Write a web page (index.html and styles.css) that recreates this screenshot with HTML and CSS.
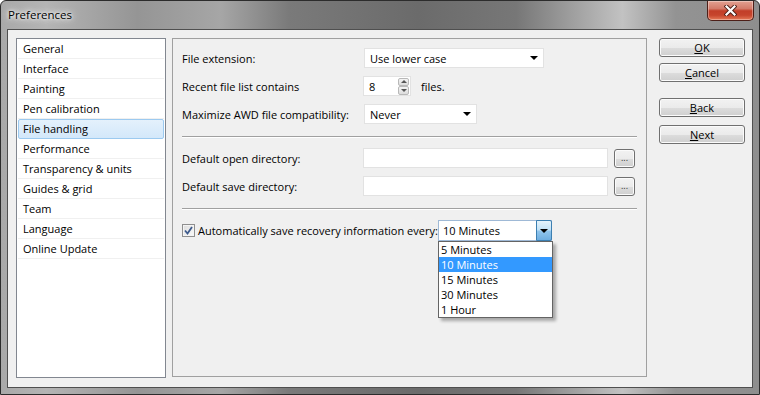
FILE: index.html
```html
<!DOCTYPE html>
<html lang="en">
<head>
    <meta charset="UTF-8">
    <title>Preferences</title>
    <link rel="stylesheet" href="styles.css">
</head>
<body>
    <div class="window">
        <div class="titlebar">
            <span class="title">Preferences</span>
            <div class="close-btn">
                <svg width="13" height="11" viewBox="0 0 13 11">
                    <path d="M2.5 1.5 L10.5 9.5 M10.5 1.5 L2.5 9.5" stroke="#4a1d16" stroke-width="4" stroke-linecap="square"/>
                    <path d="M2.5 1.5 L10.5 9.5 M10.5 1.5 L2.5 9.5" stroke="#fff" stroke-width="2.2" stroke-linecap="square"/>
                </svg>
            </div>
        </div>
        <div class="client">
            <ul class="page-list">
                <li>General</li>
                <li>Interface</li>
                <li>Painting</li>
                <li>Pen calibration</li>
                <li class="selected">File handling</li>
                <li>Performance</li>
                <li>Transparency &amp; units</li>
                <li>Guides &amp; grid</li>
                <li>Team</li>
                <li>Language</li>
                <li>Online Update</li>
            </ul>

            <div class="panel">
                <div class="group first">
                    <div class="row">
                        <span class="label">File extension:</span>
                        <div class="combo combo-ext"><span>Use lower case</span><span class="arrow"></span></div>
                    </div>
                    <div class="row">
                        <span class="label">Recent file list contains</span>
                        <div class="spinbox">
                            <span class="spin-value">8</span>
                            <div class="spin-btns">
                                <div class="spin-btn"><span class="up"></span></div>
                                <div class="spin-btn"><span class="down"></span></div>
                            </div>
                        </div>
                        <span class="unit">files.</span>
                    </div>
                    <div class="row">
                        <span class="label">Maximize AWD file compatibility:</span>
                        <div class="combo combo-awd"><span>Never</span><span class="arrow"></span></div>
                    </div>
                </div>

                <div class="sep"></div>

                <div class="group">
                    <div class="row">
                        <span class="label">Default open directory:</span>
                        <div class="textbox"></div>
                        <div class="btn btn-small">...</div>
                    </div>
                    <div class="row">
                        <span class="label">Default save directory:</span>
                        <div class="textbox"></div>
                        <div class="btn btn-small">...</div>
                    </div>
                </div>

                <div class="sep"></div>

                <div class="group">
                    <div class="row row-check">
                        <span class="checkbox">
                            <svg width="9" height="9" viewBox="0 0 9 9"><path d="M1 4.5 L3.5 7.5 L8 1" fill="none" stroke="#3d5a8c" stroke-width="1.8"/></svg>
                        </span>
                        <span class="check-label">Automatically save recovery information every:</span>
                        <div class="combo combo-open">
                            <span>10 Minutes</span>
                            <div class="drop-btn"><span class="arrow"></span></div>
                            <ul class="drop-list">
                                <li>5 Minutes</li>
                                <li class="hot">10 Minutes</li>
                                <li>15 Minutes</li>
                                <li>30 Minutes</li>
                                <li>1 Hour</li>
                            </ul>
                        </div>
                    </div>
                </div>
            </div>

            <div class="buttons">
                <div class="btn btn-ok"><u>O</u>K</div>
                <div class="btn btn-cancel"><u>C</u>ancel</div>
                <div class="btn btn-back"><u>B</u>ack</div>
                <div class="btn btn-next"><u>N</u>ext</div>
            </div>
        </div>
    </div>
</body>
</html>
```

FILE: styles.css
```css
* {
    box-sizing: border-box;
}

body {
    margin: 0;
    font-family: "Open Sans", "Noto Sans", sans-serif;
    font-size: 11px;
    color: #000;
    background: #fff;
}

.window {
    width: 760px;
    height: 395px;
    border: 1px solid #2c2c2c;
    border-radius: 6px 6px 0 0;
    display: flex;
    flex-direction: column;
    background: linear-gradient(to right, #a9a9a9 0%, #b4b4b4 6%, #959595 18%, #a6a6a6 29%, #7a7a7a 38%, #6b6b6b 55%, #777 68%, #adadad 78%, #c2c2c2 82%, #939393 89%, #8e8e8e 100%);
}

.titlebar {
    height: 28px;
    display: flex;
    justify-content: space-between;
    align-items: flex-start;
    padding-left: 7px;
}

.title {
    line-height: 28px;
    font-size: 11.5px;
    text-shadow: 0 0 6px #fff, 0 0 10px #e8e8e8, 0 0 3px #fff;
}

.close-btn {
    width: 47px;
    height: 20px;
    margin-right: 5px;
    border: 1px solid #4d1f18;
    border-top: none;
    border-radius: 0 0 5px 5px;
    display: flex;
    align-items: center;
    justify-content: center;
    background: linear-gradient(#e3a192 0%, #d47b6a 40%, #c23e28 52%, #c6452d 75%, #e57a58 100%);
    box-shadow: inset 0 0 0 1px rgba(255, 255, 255, 0.35);
}

.client {
    flex: 1;
    margin: 0 6px 6px 6px;
    border: 1px solid #4f4f4f;
    background: #f0f0f0;
    display: flex;
    align-items: flex-start;
    padding: 8px 7px 0 8px;
}

/* left page list */
.page-list {
    margin: 0;
    padding: 0;
    list-style: none;
    width: 150px;
    height: 340px;
    flex-shrink: 0;
    background: #fff;
    border: 1px solid #828790;
}

.page-list li {
    height: 20px;
    line-height: 19px;
    padding-left: 5px;
    margin: 0 1px;
    border-bottom: 1px solid #f0f0f0;
}

.page-list li.selected {
    background: linear-gradient(#e4f1fc, #d3e8fa);
    border: 1px solid #9ccaf0;
    border-radius: 2px;
    padding-left: 4px;
    line-height: 18px;
}

/* settings panel */
.panel {
    width: 475px;
    height: 339px;
    margin-left: 6px;
    flex-shrink: 0;
    border: 1px solid #a0a0a0;
    padding: 0 9px;
}

.group.first {
    padding-top: 9px;
}

.row {
    display: flex;
    align-items: center;
    height: 20px;
}

.row + .row {
    margin-top: 8px;
}

.label {
    width: 181px;
    flex-shrink: 0;
}

.sep {
    margin: 12px 0 10px;
    border-top: 1px solid #a0a0a0;
    border-bottom: 1px solid #fff;
}

.combo {
    position: relative;
    height: 20px;
    margin-left: 1px;
    background: #fff;
    border: 1px solid #e2e2e2;
    display: flex;
    align-items: center;
    justify-content: space-between;
    padding: 0 4px 0 5px;
}

.combo-ext {
    width: 180px;
}

.combo-awd {
    width: 113px;
}

.arrow {
    width: 0;
    height: 0;
    border-left: 4px solid transparent;
    border-right: 4px solid transparent;
    border-top: 4px solid #000;
    margin-right: 1px;
}

.spinbox {
    width: 48px;
    height: 20px;
    background: #fff;
    border: 1px solid #e2e2e2;
    display: flex;
    align-items: center;
    justify-content: space-between;
    padding: 1px 1px 1px 5px;
}

.spin-btns {
    width: 11px;
    height: 17px;
    display: flex;
    flex-direction: column;
}

.spin-btn {
    flex: 1;
    border: 1px solid #b8b8b8;
    border-radius: 2px;
    background: linear-gradient(#f4f4f4, #dcdcdc);
    display: flex;
    align-items: center;
    justify-content: center;
}

.spin-btn .up,
.spin-btn .down {
    width: 0;
    height: 0;
    border-left: 3px solid transparent;
    border-right: 3px solid transparent;
}

.spin-btn .up {
    border-bottom: 3px solid #555;
}

.spin-btn .down {
    border-top: 3px solid #555;
}

.unit {
    margin-left: 10px;
}

.textbox {
    width: 245px;
    height: 20px;
    background: #fff;
    border: 1px solid #e2e2e2;
}

.btn {
    height: 19px;
    border: 1px solid #707070;
    border-radius: 3px;
    background: linear-gradient(#f2f2f2 0%, #ebebeb 50%, #dddddd 51%, #cfcfcf 100%);
    box-shadow: inset 0 0 0 1px #fbfbfb;
    display: flex;
    align-items: center;
    justify-content: center;
    line-height: 1;
}

.btn-small {
    width: 21px;
    margin-left: 6px;
    font-size: 9px;
    color: #333;
    padding-bottom: 2px;
}

.row-check {
    height: 21px;
}

.checkbox {
    width: 13px;
    height: 13px;
    border: 1px solid #8f8f8f;
    background: linear-gradient(135deg, #dcdcdc, #fbfbfb);
    box-shadow: inset 0 0 0 1px #f4f4f4;
    display: flex;
    align-items: center;
    justify-content: center;
    flex-shrink: 0;
}

.check-label {
    width: 243px;
    padding-left: 3px;
    flex-shrink: 0;
}

.combo-open {
    width: 114px;
    height: 21px;
    margin-left: 0;
    padding: 0 0 0 4px;
    border-color: #9fb9d6;
}

.drop-btn {
    width: 16px;
    height: 21px;
    margin-right: -1px;
    border: 1px solid #3c7fb1;
    border-radius: 0 2px 2px 0;
    background: linear-gradient(#e5f3fb 0%, #c4e3f7 45%, #8fc4ec 55%, #6eaee0 100%);
    display: flex;
    align-items: center;
    justify-content: center;
}

.drop-btn .arrow {
    margin: 0;
}

.drop-list {
    position: absolute;
    top: 20px;
    left: -1px;
    width: 115px;
    margin: 0;
    padding: 0;
    list-style: none;
    background: #fff;
    border: 1px solid #646464;
    box-shadow: 3px 3px 3px rgba(0, 0, 0, 0.3);
}

.drop-list li {
    height: 15px;
    line-height: 15px;
    padding-left: 2px;
}

.drop-list li.hot {
    background: #3399ff;
    color: #fff;
}

/* dialog buttons */
.buttons {
    width: 86px;
    margin-left: 12px;
    flex-shrink: 0;
    display: flex;
    flex-direction: column;
}

.btn-cancel {
    margin-top: 6px;
}

.btn-back {
    margin-top: 16px;
}

.btn-next {
    margin-top: 8px;
}
```
